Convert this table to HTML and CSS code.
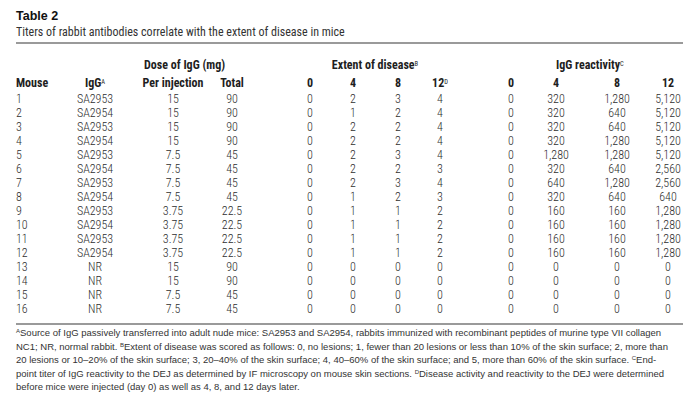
FILE: index.html
```html
<!DOCTYPE html>
<html>
<head>
<meta charset="utf-8">
<link rel="stylesheet" href="styles.css">
</head>
<body>
<div class="page">
  <div class="title">Table 2</div>
  <div class="subtitle">Titers of rabbit antibodies correlate with the extent of disease in mice</div>
  <div class="grid group-head">
    <div class="hd span-dose">Dose of IgG (mg)</div>
    <div class="hd span-ext">Extent of disease<sup>B</sup></div>
    <div class="hd span-react">IgG reactivity<sup>C</sup></div>
  </div>
  <div class="grid col-head">
    <div class="hd first">Mouse</div>
    <div class="hd c"><span>IgG<sup>A</sup></span></div>
    <div class="hd c"><span>Per injection</span></div>
    <div class="hd c"><span>Total</span></div>
    <div class="hd c"><span>0</span></div>
    <div class="hd c"><span>4</span></div>
    <div class="hd c"><span>8</span></div>
    <div class="hd c"><span>12<sup>D</sup></span></div>
    <div class="hd c"><span>0</span></div>
    <div class="hd c"><span>4</span></div>
    <div class="hd c"><span>8</span></div>
    <div class="hd c"><span>12</span></div>
  </div>
  <div class="grid body" id="rows"></div>
  <div class="notes">
    <span class="line"><sup>A</sup>Source of IgG passively transferred into adult nude mice: SA2953 and SA2954, rabbits immunized with recombinant peptides of murine type VII collagen</span>
    <span class="line">NC1; NR, normal rabbit. <sup>B</sup>Extent of disease was scored as follows: 0, no lesions; 1, fewer than 20 lesions or less than 10% of the skin surface; 2, more than</span>
    <span class="line">20 lesions or 10–20% of the skin surface; 3, 20–40% of the skin surface; 4, 40–60% of the skin surface; and 5, more than 60% of the skin surface. <sup>C</sup>End-</span>
    <span class="line">point titer of IgG reactivity to the DEJ as determined by IF microscopy on mouse skin sections. <sup>D</sup>Disease activity and reactivity to the DEJ were determined</span>
    <span class="line">before mice were injected (day 0) as well as 4, 8, and 12 days later.</span>
  </div>
</div>
<script src="app.js"></script>
</body>
</html>
```
FILE: app.js
```js
const data = [
  ["1","SA2953","15","90","0","2","3","4","0","320","1,280","5,120"],
  ["2","SA2954","15","90","0","1","2","4","0","320","640","5,120"],
  ["3","SA2953","15","90","0","2","2","4","0","320","640","5,120"],
  ["4","SA2954","15","90","0","2","2","4","0","320","1,280","5,120"],
  ["5","SA2953","7.5","45","0","2","3","4","0","1,280","1,280","5,120"],
  ["6","SA2954","7.5","45","0","2","2","3","0","320","640","2,560"],
  ["7","SA2953","7.5","45","0","2","3","4","0","640","1,280","2,560"],
  ["8","SA2954","7.5","45","0","1","2","3","0","320","640","640"],
  ["9","SA2953","3.75","22.5","0","1","1","2","0","160","160","1,280"],
  ["10","SA2954","3.75","22.5","0","1","1","2","0","160","160","1,280"],
  ["11","SA2953","3.75","22.5","0","1","1","2","0","160","160","1,280"],
  ["12","SA2954","3.75","22.5","0","1","1","2","0","160","160","1,280"],
  ["13","NR","15","90","0","0","0","0","0","0","0","0"],
  ["14","NR","15","90","0","0","0","0","0","0","0","0"],
  ["15","NR","7.5","45","0","0","0","0","0","0","0","0"],
  ["16","NR","7.5","45","0","0","0","0","0","0","0","0"]
];
const rows = document.getElementById("rows");
for (const r of data) {
  r.forEach((v, i) => {
    const d = document.createElement("div");
    d.className = i === 0 ? "td first" : "td c";
    d.textContent = v;
    rows.appendChild(d);
  });
}
```
FILE: styles.css
```css
html, body { margin: 0; padding: 0; background: #fff; }
.page {
  width: 667px;
  padding: 8px 17px 0 16px;
  font-family: Roboto, "Liberation Sans", sans-serif;
  font-stretch: condensed;
  color: #222;
}
.title {
  font-family: "Liberation Sans", Arial, sans-serif;
  font-stretch: normal;
  font-weight: bold;
  font-size: 12.5px;
  line-height: 16px;
  color: #111;
}
.subtitle {
  font-size: 12px;
  line-height: 16px;
  color: #333;
  padding-bottom: 2px;
  border-bottom: 2px solid #9a9a9a;
}
.grid {
  display: grid;
  grid-template-columns: 79px 78px 59px 78px 43px 45px 42px 71px 45px 61px 51px 15px;
  font-size: 12px;
}
.grid > div { line-height: 14px; height: 14px; white-space: nowrap; }
.group-head { margin-top: 14px; }
.col-head { margin-top: 4px; }
.hd { font-weight: bold; color: #1e1e1e; }
.c {
  width: 0;
  display: flex;
  justify-content: center;
}
.first { justify-self: start; }
.span-dose { grid-column: 2 / 5; padding-left: 49px; }
.span-ext { grid-column: 5 / 8; text-align: center; }
.span-react { grid-column: 10 / 11; text-align: center; }
.body {
  margin-top: 2px;
  padding-bottom: 7px;
  border-bottom: 2px solid #9a9a9a;
}
.td { color: #2e2e2e; font-weight: 300; }
sup { font-size: 6.5px; line-height: 0; vertical-align: 3px; font-weight: normal; }
.notes {
  font-family: "Liberation Sans", Arial, sans-serif;
  font-stretch: normal;
  font-size: 9.5px;
  line-height: 13.6px;
  color: #333;
  padding-top: 1px;
}
.line { display: block; white-space: nowrap; }
.notes sup { font-size: 6px; vertical-align: 3px; }
```
